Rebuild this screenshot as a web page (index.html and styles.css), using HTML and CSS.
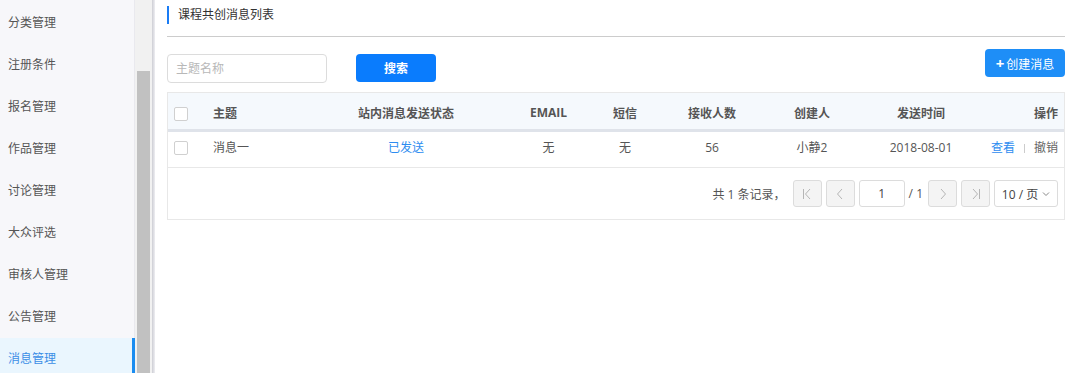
FILE: index.html
```html
<!DOCTYPE html>
<html lang="zh-CN">
<head>
    <meta charset="UTF-8">
    <title>课程共创消息列表</title>
    <link rel="stylesheet" href="styles.css">
</head>
<body>
    <div class="layout">
        <div class="sidebar">
            <ul class="menu">
                <li>分类管理</li>
                <li>注册条件</li>
                <li>报名管理</li>
                <li>作品管理</li>
                <li>讨论管理</li>
                <li>大众评选</li>
                <li>审核人管理</li>
                <li>公告管理</li>
                <li class="active">消息管理</li>
            </ul>
            <div class="scrollbar"><div class="thumb"></div></div>
            <div class="shade"></div>
        </div>

        <div class="main">
            <div class="title"><span>课程共创消息列表</span></div>

            <div class="toolbar">
                <input type="text" class="search-input" placeholder="主题名称">
                <button class="btn-search">搜索</button>
                <button class="btn-create"><span class="plus">+</span>创建消息</button>
            </div>

            <div class="table-box">
                <table class="list">
                    <colgroup>
                        <col style="width:37px">
                        <col style="width:125px">
                        <col style="width:152px">
                        <col style="width:108px">
                        <col style="width:70px">
                        <col style="width:104px">
                        <col style="width:96px">
                        <col style="width:122px">
                        <col style="width:82px">
                    </colgroup>
                    <thead>
                        <tr>
                            <th class="c-check"><span class="checkbox"></span></th>
                            <th class="c-left">主题</th>
                            <th>站内消息发送状态</th>
                            <th class="c-email">EMAIL</th>
                            <th>短信</th>
                            <th>接收人数</th>
                            <th>创建人</th>
                            <th>发送时间</th>
                            <th class="c-right">操作</th>
                        </tr>
                    </thead>
                    <tbody>
                        <tr>
                            <td class="c-check"><span class="checkbox"></span></td>
                            <td class="c-left">消息一</td>
                            <td class="sent">已发送</td>
                            <td class="c-email">无</td>
                            <td>无</td>
                            <td>56</td>
                            <td>小静2</td>
                            <td>2018-08-01</td>
                            <td class="c-right"><a class="link">查看</a><span class="sep"></span><a class="link gray">撤销</a></td>
                        </tr>
                    </tbody>
                </table>

                <div class="pager">
                    <span class="total">共 1 条记录，</span>
                    <span class="pg-btn">
                        <svg width="10" height="12" viewBox="0 0 10 12"><path d="M1.5 1v10M8 1L3.5 6 8 11" fill="none" stroke="#b5b5b5" stroke-width="1"/></svg>
                    </span>
                    <span class="pg-btn">
                        <svg width="10" height="12" viewBox="0 0 10 12"><path d="M7 1L2.5 6 7 11" fill="none" stroke="#b5b5b5" stroke-width="1"/></svg>
                    </span>
                    <span class="pg-input">1</span>
                    <span class="pg-count">/ 1</span>
                    <span class="pg-btn">
                        <svg width="10" height="12" viewBox="0 0 10 12"><path d="M3 1L7.5 6 3 11" fill="none" stroke="#b5b5b5" stroke-width="1"/></svg>
                    </span>
                    <span class="pg-btn">
                        <svg width="10" height="12" viewBox="0 0 10 12"><path d="M2 1L6.5 6 2 11M8.5 1v10" fill="none" stroke="#b5b5b5" stroke-width="1"/></svg>
                    </span>
                    <span class="pg-size">10 / 页
                        <svg width="8" height="6" viewBox="0 0 8 6"><path d="M1 1.5L4 4.5 7 1.5" fill="none" stroke="#888" stroke-width="1"/></svg>
                    </span>
                </div>
            </div>
        </div>
    </div>
</body>
</html>
```

FILE: styles.css
```css
body {
    margin: 0;
    height: 373px;
    overflow: hidden;
    background-color: #fff;
    font-family: "Open Sans", "Noto Sans CJK SC", sans-serif;
    color: #555;
}
.layout {
    display: flex;
    height: 373px;
}

/* sidebar */
.sidebar {
    display: flex;
    width: 155px;
    flex-shrink: 0;
    height: 373px;
}
.menu {
    list-style: none;
    margin: 0;
    padding: 2px 0 0;
    width: 135px;
    background-color: #f7f7fa;
    box-shadow: inset -1px 0 0 #e9e9ee;
}
.menu li {
    height: 42px;
    line-height: 42px;
    padding-left: 8px;
    font-size: 12px;
    color: #555;
}
.menu li.active {
    background-color: #eaf6fe;
    color: #3a8ee6;
    box-shadow: inset -3px 0 0 #1a8cf0;
}
.scrollbar {
    width: 17px;
    background-color: #f1f1f1;
}
.thumb {
    margin: 71px 0 0 2px;
    width: 13px;
    height: 302px;
    background-color: #c1c1c1;
}
.shade {
    width: 3px;
    background: linear-gradient(to right, #cdced4, #eeeef2);
}

/* main */
.main {
    flex: 1;
    padding: 6px 5px 0 12px;
}
.title {
    height: 30px;
    border-bottom: 1px solid #cccccc;
}
.title span {
    display: block;
    border-left: 2px solid #1a7cf5;
    height: 18px;
    line-height: 18px;
    padding-left: 9px;
    font-size: 12px;
    color: #333;
}
.toolbar {
    display: flex;
    align-items: flex-start;
    margin-top: 12px;
    height: 34px;
}
.search-input {
    box-sizing: border-box;
    margin-top: 5px;
    width: 160px;
    height: 29px;
    border: 1px solid #dcdcdc;
    border-radius: 4px;
    padding: 0 8px;
    font-size: 12px;
    font-family: inherit;
    outline: none;
}
.search-input::placeholder {
    color: #b8b8b8;
}
.btn-search {
    margin: 5px 0 0 29px;
    width: 80px;
    height: 28px;
    border: none;
    border-radius: 4px;
    background-color: #0a7cfd;
    color: #fff;
    font-size: 12px;
    font-weight: bold;
    font-family: inherit;
}
.btn-create {
    margin-left: auto;
    width: 80px;
    height: 28px;
    border: none;
    border-radius: 4px;
    background-color: #1e8ef7;
    color: #fff;
    font-size: 12px;
    font-family: inherit;
    padding: 0;
}
.plus {
    font-weight: bold;
    font-size: 15px;
    margin-right: 2px;
}

/* table */
.table-box {
    margin-top: 9px;
    width: 898px;
    box-sizing: border-box;
    border: 1px solid #e8e8e8;
}
.list {
    width: 896px;
    table-layout: fixed;
    border-collapse: collapse;
    font-size: 12px;
}
.list th {
    height: 33px;
    padding: 3px 0 0;
    background-color: #f5f9fd;
    border-bottom: 3px solid #dfe3ea;
    font-weight: bold;
    color: #555;
    text-align: center;
}
.list td {
    height: 30px;
    padding: 0 0 5px;
    border-bottom: 1px solid #e8e8e8;
    text-align: center;
    color: #555;
}
.list .c-check {
    text-align: left;
    padding-left: 6px;
}
.list .c-left {
    text-align: left;
    padding-left: 8px;
}
.list .c-email {
    padding-left: 25px;
}
.list .c-right {
    text-align: right;
    padding-right: 6px;
}
.checkbox {
    display: inline-block;
    box-sizing: border-box;
    width: 14px;
    height: 14px;
    border: 1px solid #d0d0d0;
    border-radius: 2px;
    background-color: #fff;
    vertical-align: middle;
}
.list .sent {
    color: #2d8cf0;
}
.link {
    color: #2d8cf0;
}
.link.gray {
    color: #666;
}
.sep {
    display: inline-block;
    width: 1px;
    height: 9px;
    background-color: #ccc;
    margin: 0 9px;
    vertical-align: middle;
}

/* pager */
.pager {
    display: flex;
    justify-content: flex-end;
    align-items: center;
    padding: 12px 6px 12px 0;
    font-size: 12px;
    color: #555;
}
.total {
    margin-right: 7px;
}
.pg-btn {
    display: flex;
    align-items: center;
    justify-content: center;
    box-sizing: border-box;
    width: 29px;
    height: 27px;
    border: 1px solid #dcdcdc;
    border-radius: 3px;
    background-color: #f4f4f4;
    margin-right: 4px;
}
.pg-input {
    box-sizing: border-box;
    width: 46px;
    height: 27px;
    line-height: 25px;
    border: 1px solid #dcdcdc;
    border-radius: 3px;
    text-align: center;
    color: #444;
}
.pg-count {
    margin: 0 5px 0 4px;
}
.pg-size {
    display: flex;
    align-items: center;
    justify-content: center;
    gap: 4px;
    box-sizing: border-box;
    width: 64px;
    height: 27px;
    border: 1px solid #dcdcdc;
    border-radius: 3px;
    color: #444;
}
```
